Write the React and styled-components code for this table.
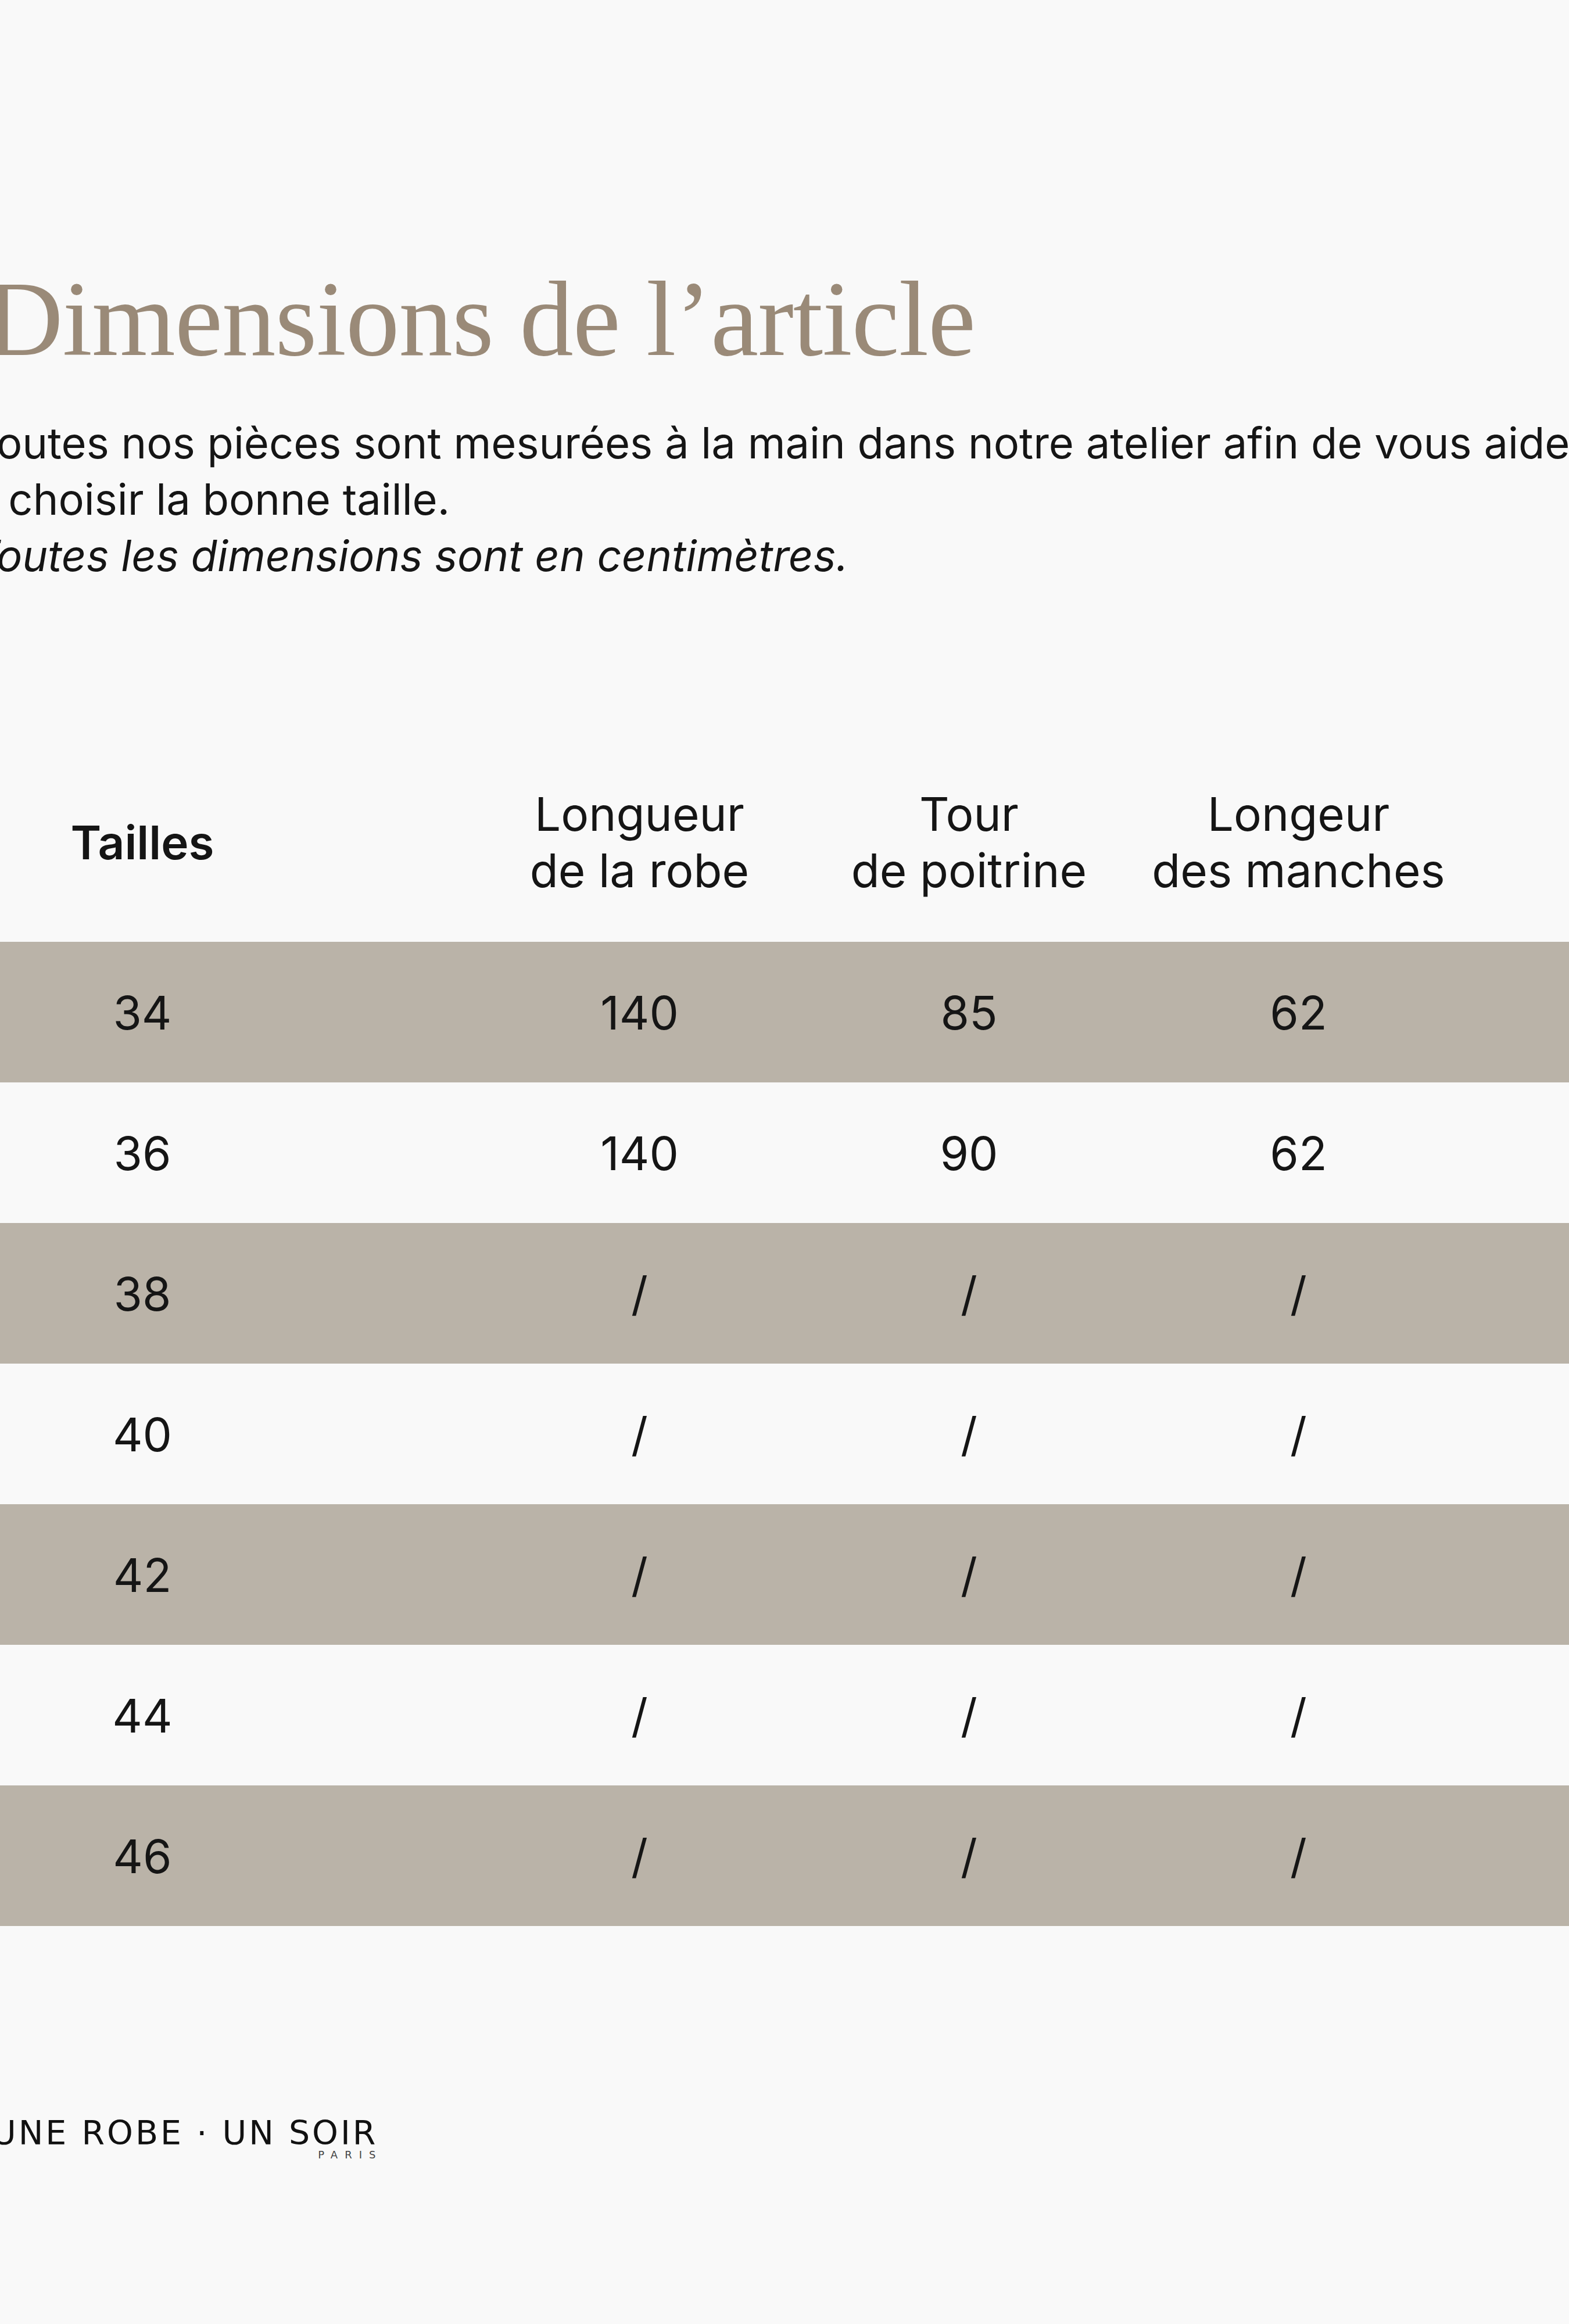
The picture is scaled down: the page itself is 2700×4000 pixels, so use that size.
import React from "react";
import styled, { createGlobalStyle } from "styled-components";

const Global = createGlobalStyle`
  html, body { margin: 0; padding: 0; background: #f9f9f9; }
  body { min-height: 4000px; overflow: hidden; }
`;

const Page = styled.div`
  width: 2700px;
  height: 4000px;
  overflow: hidden;
  background: #f9f9f9;
  color: #151515;
  font-family: Inter, "Noto Sans", sans-serif;
`;

const Intro = styled.section`
  padding-top: 446px;
  margin-left: -48px;
  width: 2900px;
`;

const Title = styled.h1`
  margin: 0 0 0 23px;
  font-family: "Liberation Serif", serif;
  font-weight: 400;
  font-size: 185px;
  line-height: 206px;
  color: #9a8a78;
  letter-spacing: -1px;
`;

const Lead = styled.p`
  margin: ${(p) => (p.$italic ? "0" : "62px 0 0")};
  font-size: 74px;
  line-height: 97px;
  font-style: ${(p) => (p.$italic ? "italic" : "normal")};
  white-space: nowrap;
`;

const Table = styled.div`
  margin-top: 347px;
  display: flex;
  flex-direction: column;
`;

const Row = styled.div`
  display: grid;
  grid-template-columns: 490px 327px repeat(3, 567px) 1fr;
  align-items: center;
  height: ${(p) => (p.$head ? "auto" : "242px")};
  padding-bottom: ${(p) => (p.$head ? "75px" : "0")};
  background: ${(p) => (p.$shaded ? "#bab3a8" : "transparent")};
`;

const Cell = styled.div`
  text-align: center;
  font-size: 80px;
  line-height: 97px;
  font-weight: ${(p) => (p.$bold ? 600 : 400)};
  white-space: nowrap;
  &:nth-child(2) { grid-column-start: 3; }
`;

const Footer = styled.footer`
  margin-top: 324px;
  margin-left: -14px;
  display: inline-flex;
  flex-direction: column;
  align-items: flex-end;
`;

const Brand = styled.div`
  font-family: "DejaVu Sans", sans-serif;
  font-size: 57px;
  line-height: 64px;
  letter-spacing: 4px;
  color: #111;
  white-space: nowrap;
`;

const Paris = styled.div`
  font-family: "DejaVu Sans", sans-serif;
  font-size: 18px;
  line-height: 20px;
  letter-spacing: 12px;
  margin-right: -8px;
  margin-top: -4px;
  color: #444;
`;

const rows = [
  ["34", "140", "85", "62"],
  ["36", "140", "90", "62"],
  ["38", "/", "/", "/"],
  ["40", "/", "/", "/"],
  ["42", "/", "/", "/"],
  ["44", "/", "/", "/"],
  ["46", "/", "/", "/"],
];

export default function App() {
  return (
    <Page>
      <Global />
      <Intro>
        <Title>Dimensions de l’article</Title>
        <Lead>
          Toutes nos pièces sont mesurées à la main dans notre atelier afin de vous aider
          <br />à choisir la bonne taille.
        </Lead>
        <Lead $italic>Toutes les dimensions sont en centimètres.</Lead>
      </Intro>
      <Table>
        <Row $head>
          <Cell $bold>Tailles</Cell>
          <Cell>Longueur<br />de la robe</Cell>
          <Cell>Tour<br />de poitrine</Cell>
          <Cell>Longeur<br />des manches</Cell>
        </Row>
        {rows.map((r, i) => (
          <Row key={r[0]} $shaded={i % 2 === 0}>
            {r.map((v, j) => (
              <Cell key={j}>{v}</Cell>
            ))}
          </Row>
        ))}
      </Table>
      <Footer>
        <Brand>UNE ROBE · UN SOIR</Brand>
        <Paris>PARIS</Paris>
      </Footer>
    </Page>
  );
}
